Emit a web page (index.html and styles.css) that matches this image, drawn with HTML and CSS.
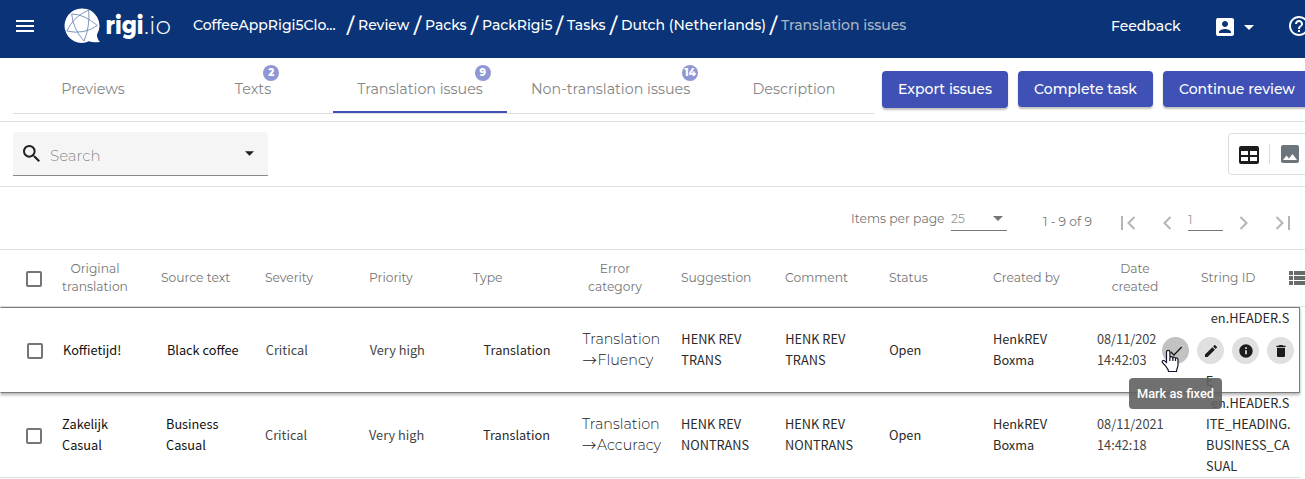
FILE: index.html
```html
<!DOCTYPE html>
<html lang="en">
<head>
  <meta charset="UTF-8">
  <meta name="viewport" content="width=device-width, initial-scale=1.0">
  <title>rigi.io | Translation issues</title>
  <link rel="stylesheet" href="styles.css">
</head>
<body>

  <header class="topbar">
    <svg class="menu" viewBox="0 0 18 12"><path d="M0 0h18v2H0zM0 5h18v2H0zM0 10h18v2H0z"/></svg>
    <svg class="logo" viewBox="0 0 108 40">
      <path class="bubble" d="M17.500 1.500a17.200 17.200 0 1 0 7.500 32.800c3 1.200 6.500 1.200 11 .6-2-1.800-3.200-4.400-3-7.500A17.200 17.200 0 0 0 17.500 1.500z"/>
      <path class="net" d="M7.700 7Q20 7 33.300 18.500M7.700 7Q9 22 20 34M24.700 3Q26 20 20 34M24.700 3Q10 9 2.700 24M2.700 24Q20 28 33.300 18.500"/>
      <text class="bold" x="41.500" y="27" textLength="38" lengthAdjust="spacingAndGlyphs">rigi</text>
      <text class="thin" x="80" y="27" textLength="27" lengthAdjust="spacingAndGlyphs">.io</text>
    </svg>
    <nav class="crumbs">
      <a class="project">CoffeeAppRigi5Clo...</a><i>/</i>
      <a class="review">Review</a><i>/</i>
      <a class="packs">Packs</a><i>/</i>
      <a class="pack">PackRigi5</a><i>/</i>
      <a class="tasks">Tasks</a><i>/</i>
      <a class="lang">Dutch (Netherlands)</a><i>/</i>
      <a class="current">Translation issues</a>
    </nav>
    <a class="feedback">Feedback</a>
    <svg class="account" viewBox="3 3 18 18"><path d="M3 5v14a2 2 0 0 0 2 2h14c1.100 0 2-.9 2-2V5c0-1.100-.9-2-2-2H5a2 2 0 0 0-2 2zm12 4c0 1.660-1.340 3-3 3s-3-1.340-3-3 1.340-3 3-3 3 1.340 3 3zm-9 8c0-2 4-3.100 6-3.100s6 1.100 6 3.100v1H6v-1z"/></svg>
    <svg class="caret" viewBox="0 0 10 5"><path d="M0 0h10L5 5z"/></svg>
    <svg class="help" viewBox="2 2 20 20"><path d="M11 18h2v-2h-2v2zm1-16C6.480 2 2 6.480 2 12s4.480 10 10 10 10-4.480 10-10S17.520 2 12 2zm0 18c-4.410 0-8-3.590-8-8s3.590-8 8-8 8 3.590 8 8-3.590 8-8 8zm0-14c-2.210 0-4 1.790-4 4h2c0-1.100.9-2 2-2s2 .9 2 2c0 2-3 1.750-3 5h2c0-2.250 3-2.500 3-5 0-2.210-1.790-4-4-4z"/></svg>
  </header>

  <section class="tabbar">
    <div class="tabs">
      <a class="tab"><span>Previews</span></a>
      <a class="tab"><span>Texts<b>2</b></span></a>
      <a class="tab active"><span>Translation issues<b>9</b></span></a>
      <a class="tab wide"><span>Non-translation issues<b>14</b></span></a>
      <a class="tab"><span>Description</span></a>
    </div>
    <button class="btn export">Export issues</button>
    <button class="btn complete">Complete task</button>
    <button class="btn continue">Continue review</button>
  </section>

  <section class="filter">
    <div class="search">
      <svg class="glass" viewBox="3 3 17.500 17.500"><path d="M15.500 14h-.79l-.28-.27A6.470 6.470 0 0 0 16 9.500 6.500 6.500 0 1 0 9.500 16c1.610 0 3.090-.59 4.230-1.570l.27.28v.79l5 4.990L20.490 19l-4.990-5zm-6 0C7.010 14 5 11.990 5 9.500S7.010 5 9.500 5 14 7.010 14 9.500 11.990 14 9.500 14z"/></svg>
      <span>Search</span>
      <svg class="caret" viewBox="0 0 10 5"><path d="M0 0h10L5 5z"/></svg>
    </div>
    <div class="views">
      <svg class="grid-icon" viewBox="0 0 20 18"><path fill-rule="evenodd" d="M2 0h16a2 2 0 0 1 2 2v14a2 2 0 0 1-2 2H2a2 2 0 0 1-2-2V2a2 2 0 0 1 2-2zm0 5v4h7V5zm9 0v4h7V5zm-9 6v4h7v-4zm9 0v4h7v-4z"/></svg>
      <svg class="image-icon" viewBox="3 3 18 18"><path d="M21 19V5c0-1.100-.9-2-2-2H5c-1.100 0-2 .9-2 2v14c0 1.100.9 2 2 2h14c1.100 0 2-.9 2-2zM8.500 13.500l2.500 3.010L14.500 12l4.500 6H5l3.500-4.500z"/></svg>
    </div>
  </section>

  <section class="pager">
    <span class="per-page">Items per page</span>
    <div class="size">25<svg class="caret" viewBox="0 0 10 5"><path d="M0 0h10L5 5z"/></svg></div>
    <span class="range">1 - 9 of 9</span>
    <svg class="first" viewBox="0 0 15 14"><path d="M1 0v14M13.500 1l-6 6 6 6"/></svg>
    <svg class="prev" viewBox="0 0 9 14"><path d="M7.500 1l-6 6 6 6"/></svg>
    <div class="page">1</div>
    <svg class="next" viewBox="0 0 9 14"><path d="M1.500 1l6 6-6 6"/></svg>
    <svg class="last" viewBox="0 0 15 14"><path d="M14 0v14M1.500 1l6 6-6 6"/></svg>
  </section>

  <main class="table">
    <div class="row head">
      <div class="check"><i></i></div>
      <div>Original translation</div>
      <div>Source text</div>
      <div>Severity</div>
      <div>Priority</div>
      <div>Type</div>
      <div>Error category</div>
      <div>Suggestion</div>
      <div>Comment</div>
      <div>Status</div>
      <div>Created by</div>
      <div>Date created</div>
      <div>String ID</div>
      <svg class="columns" viewBox="0 0 18 14"><path d="M0 0h4v4H0zM5 0h13v4H5zM0 5h4v4H0zM5 5h13v4H5zM0 10h4v4H0zM5 10h13v4H5z"/></svg>
    </div>

    <div class="row hovered">
      <div class="check"><i></i></div>
      <div class="source">Koffietijd!</div>
      <div class="source">Black coffee</div>
      <div>Critical</div>
      <div>Very high</div>
      <div class="type">Translation</div>
      <div class="category">Translation<br><span class="arrow">→</span>Fluency</div>
      <div class="dark">HENK REV TRANS</div>
      <div class="dark">HENK REV TRANS</div>
      <div class="dark">Open</div>
      <div class="dark">HenkREV<br>Boxma</div>
      <div class="date">08/11/2021 14:42:03</div>
      <div class="string-id">en.HEADER.S<br>ITE_HEADING.<br>COFFEE_TIM<br>E</div>

      <div class="actions">
        <button class="on"><svg viewBox="0 0 24 24"><path d="M4 13l5 5L20.500 6"/></svg></button>
        <button><svg viewBox="0 0 24 24"><path d="M3 17.250V21h3.750L17.810 9.940l-3.750-3.750L3 17.250zM20.710 7.040a1 1 0 0 0 0-1.410l-2.340-2.340a1 1 0 0 0-1.410 0l-1.830 1.830 3.750 3.750 1.830-1.830z"/></svg></button>
        <button><svg viewBox="0 0 24 24"><path d="M12 2C6.480 2 2 6.480 2 12s4.480 10 10 10 10-4.480 10-10S17.520 2 12 2zm1.300 15h-2.600v-6h2.600v6zm0-8h-2.600V6.500h2.600V9z"/></svg></button>
        <button><svg viewBox="0 0 24 24"><path d="M6 19c0 1.100.9 2 2 2h8c1.100 0 2-.9 2-2V7H6v12zM19 4h-3.500l-1-1h-5l-1 1H5v2h14V4z"/></svg></button>
      </div>
      <div class="tooltip">Mark as fixed</div>
      <svg class="cursor" viewBox="0 0 18 24"><path d="M5.500 13.500V3a1.700 1.700 0 0 1 3.400 0v5.500c.3-1.300 2.800-1.200 3 .3.500-1 2.400-.7 2.600.6.700-.8 2.300-.4 2.500 1V16c0 2.500-1.500 3.500-1.500 6.500h-8c0-2.500-2-3.800-3-5.700L1.300 13.500c-.7-1.600 1-2.700 2.300-1.600z"/><path d="M8.900 8.500V12M11.900 9v3M14.500 9.700V12"/></svg>
    </div>

    <div class="row">
      <div class="check"><i></i></div>
      <div class="source">Zakelijk Casual</div>
      <div class="source">Business Casual</div>
      <div>Critical</div>
      <div>Very high</div>
      <div class="type">Translation</div>
      <div class="category">Translation<br><span class="arrow">→</span>Accuracy</div>
      <div class="dark">HENK REV NONTRANS</div>
      <div class="dark">HENK REV NONTRANS</div>
      <div class="dark">Open</div>
      <div class="dark">HenkREV<br>Boxma</div>
      <div class="date">08/11/2021 14:42:18</div>
      <div class="string-id">en.HEADER.S<br>ITE_HEADING.<br>BUSINESS_CA<br>SUAL</div>
    </div>
  </main>

</body>
</html>
```
FILE: styles.css
```css
*, *::after, *::before {
  margin: 0;
  padding: 0;
  box-sizing: border-box;
}
body {
  width: 1305px;
  height: 479px;
  overflow: hidden;
  background: white;
  font-family: Montserrat, Inter, sans-serif;
  font-size: 14px;
  color: #757575;
}
svg {
  display: block;
  flex: none;
}
i {
  font-style: normal;
}

/* top bar */
.topbar {
  display: flex;
  align-items: center;
  height: 58px;
  padding-bottom: 6px;
  padding-left: 16px;
  background: #0a3477;
  color: white;
  fill: white;
  white-space: nowrap;
}
.menu {
  width: 18px;
  height: 12px;
}
.logo {
  width: 108px;
  height: 40px;
  margin: 2px 0 0 30px;
}
.net {
  fill: none;
  stroke: #5f7cae;
  stroke-width: .8;
}
.bold {
  font-size: 25px;
  font-weight: 800;
}
.thin {
  font-size: 25px;
  font-weight: 300;
}
.crumbs {
  display: flex;
  flex: none;
  align-items: center;
  height: 50px;
  width: 918px;
  margin-left: 21px;
  padding-bottom: 2px;
  font-size: 14px;
  font-weight: 500;
}
.crumbs i {
  width: 16px;
  padding-left: 1px;
  font-size: 21px;
  text-align: center;
}
.project { width: 149px; }
.review { width: 51px; }
.packs { width: 41px; }
.pack { width: 69px; }
.tasks { width: 38px; }
.lang { width: 144px; }
.current {
  color: #a9b6c6;
}
.feedback {
  flex: none;
  width: 105px;
  font-size: 14px;
  font-weight: 500;
}
.account {
  width: 18px;
  height: 18px;
  margin-top: 2px;
}
.topbar .caret {
  width: 10px;
  height: 5px;
  margin: 3px 35px 0 10px;
}
.help {
  width: 20px;
  height: 20px;
}

/* tabs and main buttons */
.tabbar {
  display: flex;
  height: 64px;
  padding-left: 13px;
  border-bottom: 1px solid #e0e0e0;
}
.tabs {
  display: flex;
  flex: none;
  height: 56px;
  width: 861px;
  border-bottom: 1px solid #dedede;
}
.tab {
  width: 160px;
  height: 55px;
  padding-top: 21px;
  text-align: center;
  line-height: 20px;
  font-size: 14.3px;
  color: #858585;
}
.tab span {
  position: relative;
}
.tab.active {
  width: 174px;
  border-bottom: 2px solid #3f51b5;
}
.tab.wide {
  width: 207px;
}
.tab b {
  position: absolute;
  top: -15px;
  right: -8px;
  width: 16px;
  height: 16px;
  border-radius: 50%;
  background: #8f98d4;
  color: white;
  font-size: 10px;
  font-weight: 800;
  line-height: 16px;
}
.btn {
  flex: none;
  height: 36px;
  margin: 13px 10px 0 0;
  border: none;
  border-radius: 4px;
  background: #3f51b5;
  box-shadow: 0 2px 2px rgba(0, 0, 0, .25);
  color: white;
  font: 500 14px Montserrat, Inter, sans-serif;
  white-space: nowrap;
}
.export {
  width: 126px;
  height: 37px;
  margin-left: 8px;
  padding-bottom: 1px;
}
.complete { width: 135px; }
.continue { width: 148px; }

/* search */
.filter {
  display: flex;
  height: 65px;
  padding: 10px 0 0 13px;
  border-bottom: 1px solid #e0e0e0;
}
.search {
  display: flex;
  flex: none;
  align-items: center;
  width: 255px;
  height: 44px;
  padding: 0 14px 0 10px;
  border-bottom: 1px solid #8a8a8a;
  border-radius: 4px 4px 0 0;
  background: #f5f5f5;
  fill: #1f1f1f;
}
.glass {
  width: 17px;
  height: 17px;
  margin-bottom: 1px;
}
.search span {
  flex: 1;
  padding: 4px 0 0 10px;
  font-size: 15px;
  font-weight: 300;
  color: #8c8c8c;
}
.search .caret {
  width: 9px;
  height: 5px;
}
.views {
  display: flex;
  align-items: center;
  width: 90px;
  height: 42px;
  margin: 1px 0 0 960px;
  padding-left: 10px;
  flex: none;
  border: 1px solid #dcdcdc;
  border-radius: 4px;
}
.grid-icon {
  width: 20px;
  height: 18px;
  margin-top: 2px;
  fill: #1c1c1c;
}
.image-icon {
  width: 30px;
  height: 20px;
  margin-left: 10px;
  padding: 1px 0 1px 11px;
  border-left: 1px solid #ddd;
  fill: #6c757d;
}

/* pagination */
.pager {
  display: flex;
  height: 63px;
  padding: 21px 0 0 851px;
  border-bottom: 1px solid #e0e0e0;
  font-size: 12.3px;
  line-height: 22px;
  white-space: nowrap;
}
.pager svg {
  fill: none;
  stroke: #b4b4b4;
  stroke-width: 2;
  height: 14px;
  margin-top: 8px;
}
.per-page { width: 100px; }
.size, .page {
  height: 23px;
  border-bottom: 1px solid #757575;
  color: #999;
}
.size {
  display: flex;
  justify-content: space-between;
  width: 56px;
  padding-right: 4px;
}
.pager .caret {
  width: 10px;
  height: 5px;
  fill: #757575;
  stroke: none;
}
.range {
  width: 78px;
  padding-top: 3px;
  margin-left: 36px;
}
.first, .last { width: 15px; }
.prev, .next { width: 9px; }
.prev { margin: 0 16px 0 27px; }
.page {
  width: 35px;
  padding-top: 1px;
}
.next { margin: 0 27px 0 16px; }

/* table */
.row {
  position: relative;
  display: grid;
  grid-template-columns: 57px repeat(12, 104px);
  grid-template-rows: 100%;
  align-items: center;
  width: 1300px;
  height: 85px;
  border-bottom: 1px solid #e0e0e0;
  font-family: "Noto Sans CJK SC", sans-serif;
  font-size: 12.75px;
  line-height: 21px;
  color: #444;
}
.row > div {
  padding: 0 24px 2px 0;
}
.row.head {
  width: 1305px;
  height: 57px;
  font-family: Montserrat, Inter, sans-serif;
  font-size: 12.3px;
  line-height: 18px;
  color: #757575;
}
.head > div {
  width: 76px;
  padding: 0 0 1px;
}
.head > div:nth-child(2), .head > div:nth-child(7), .head > div:nth-child(12) {
  text-align: center;
}
.row > .check {
  padding: 2px 0 0 26px;
}
.check i {
  display: block;
  width: 16px;
  height: 16px;
  border: 2px solid #757575;
  border-radius: 2px;
}
.columns {
  position: absolute;
  left: 1289px;
  top: 21px;
  width: 18px;
  height: 14px;
  fill: #6a6a6a;
}
.row.hovered {
  height: 86px;
  grid-template-columns: 57px repeat(12, 103.9px);
  border: 1px solid #7c7c7c;
  border-left-color: white;
  box-shadow: 0 2px 3px rgba(0, 0, 0, .3);
}
.row > .source {
  padding-left: 5px;
  color: #111;
}
.row > .type {
  padding-left: 10px;
  padding-right: 0;
  color: #2a2a2a;
}
.row > .category {
  padding: 0 0 0 5px;
  font-family: Montserrat, Inter, sans-serif;
  font-size: 14.3px;
  font-weight: 300;
  color: #222;
}
.arrow {
  display: inline-block;
  width: 15px;
  height: 20px;
  font-family: "Noto Sans CJK SC", sans-serif;
  line-height: 20px;
  vertical-align: top;
}
.row > .dark {
  color: #2a2a2a;
}
.row > .string-id {
  padding-left: 5px;
  padding-right: 0;
  text-indent: 5px;
  color: #2a2a2a;
}

/* row actions */
.row > .actions {
  position: absolute;
  top: 18px;
  right: 0;
  display: flex;
  align-items: center;
  gap: 8px;
  width: 142px;
  height: 49px;
  padding: 0 0 0 5px;
  background: white;
}
.actions button {
  display: flex;
  justify-content: center;
  align-items: center;
  width: 27px;
  height: 27px;
  border: none;
  border-radius: 50%;
  background: #e0e0e0;
}
.actions svg {
  width: 16px;
  height: 16px;
  fill: #1c1c1c;
}
.actions .on {
  background: #c2c2c2;
}
.actions .on svg {
  fill: none;
  stroke: #1c1c1c;
  stroke-width: 2;
}
.row > .tooltip {
  position: absolute;
  z-index: 2;
  left: 1128px;
  top: 70px;
  width: 93px;
  height: 31px;
  padding: 0;
  border-radius: 4px;
  background: rgba(97, 97, 97, .9);
  color: white;
  font: 500 12.8px/31px Roboto, sans-serif;
  text-align: center;
}
.cursor {
  position: absolute;
  z-index: 3;
  left: 1160px;
  top: 41px;
  width: 18px;
  height: 24px;
  fill: white;
  stroke: #15152a;
  stroke-width: 1.2;
}
```
